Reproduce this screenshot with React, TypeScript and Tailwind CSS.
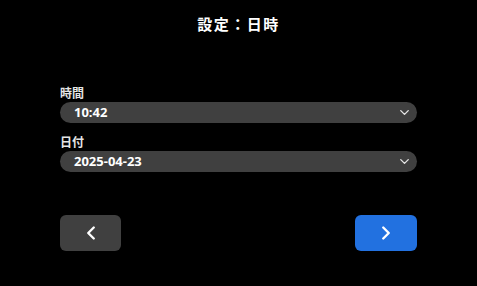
import { ChevronDown, ChevronLeft, ChevronRight } from "lucide-react";

const fields = [
  { label: "時間", value: "10:42" },
  { label: "日付", value: "2025-04-23" },
];

const App = () => {
  return (
    <div
      className="flex flex-col h-[286px] w-full bg-black text-white px-[60px] pt-3"
      style={{ fontFamily: '"Noto Sans", "Noto Sans CJK JP", sans-serif' }}
    >
      <p className="text-center text-[15px] font-bold leading-6 tracking-[1.5px]">
        設定：日時
      </p>
      <div className="flex flex-col gap-3 mt-[50px]">
        {fields.map((f) => (
          <div key={f.label} className="flex flex-col">
            <span className="text-[12px] font-bold leading-4 text-[#e5e5e5]">
              {f.label}
            </span>
            <div className="flex flex-row items-center justify-between h-[21px] rounded-full bg-[#404040] pl-[14px] pr-[5px]">
              <span className="text-[13px] font-bold leading-none">
                {f.value}
              </span>
              <ChevronDown size={15} strokeWidth={2.2} className="text-[#e5e5e5]" />
            </div>
          </div>
        ))}
      </div>
      <div className="flex flex-row justify-between mt-[43px]">
        <button className="flex items-center justify-center h-9 w-[61px] rounded-md bg-[#404040]">
          <ChevronLeft size={22} strokeWidth={2.6} />
        </button>
        <button className="flex items-center justify-center h-9 w-[62px] rounded-md bg-[#2271e0]">
          <ChevronRight size={22} strokeWidth={2.6} />
        </button>
      </div>
    </div>
  );
};

export default App;
